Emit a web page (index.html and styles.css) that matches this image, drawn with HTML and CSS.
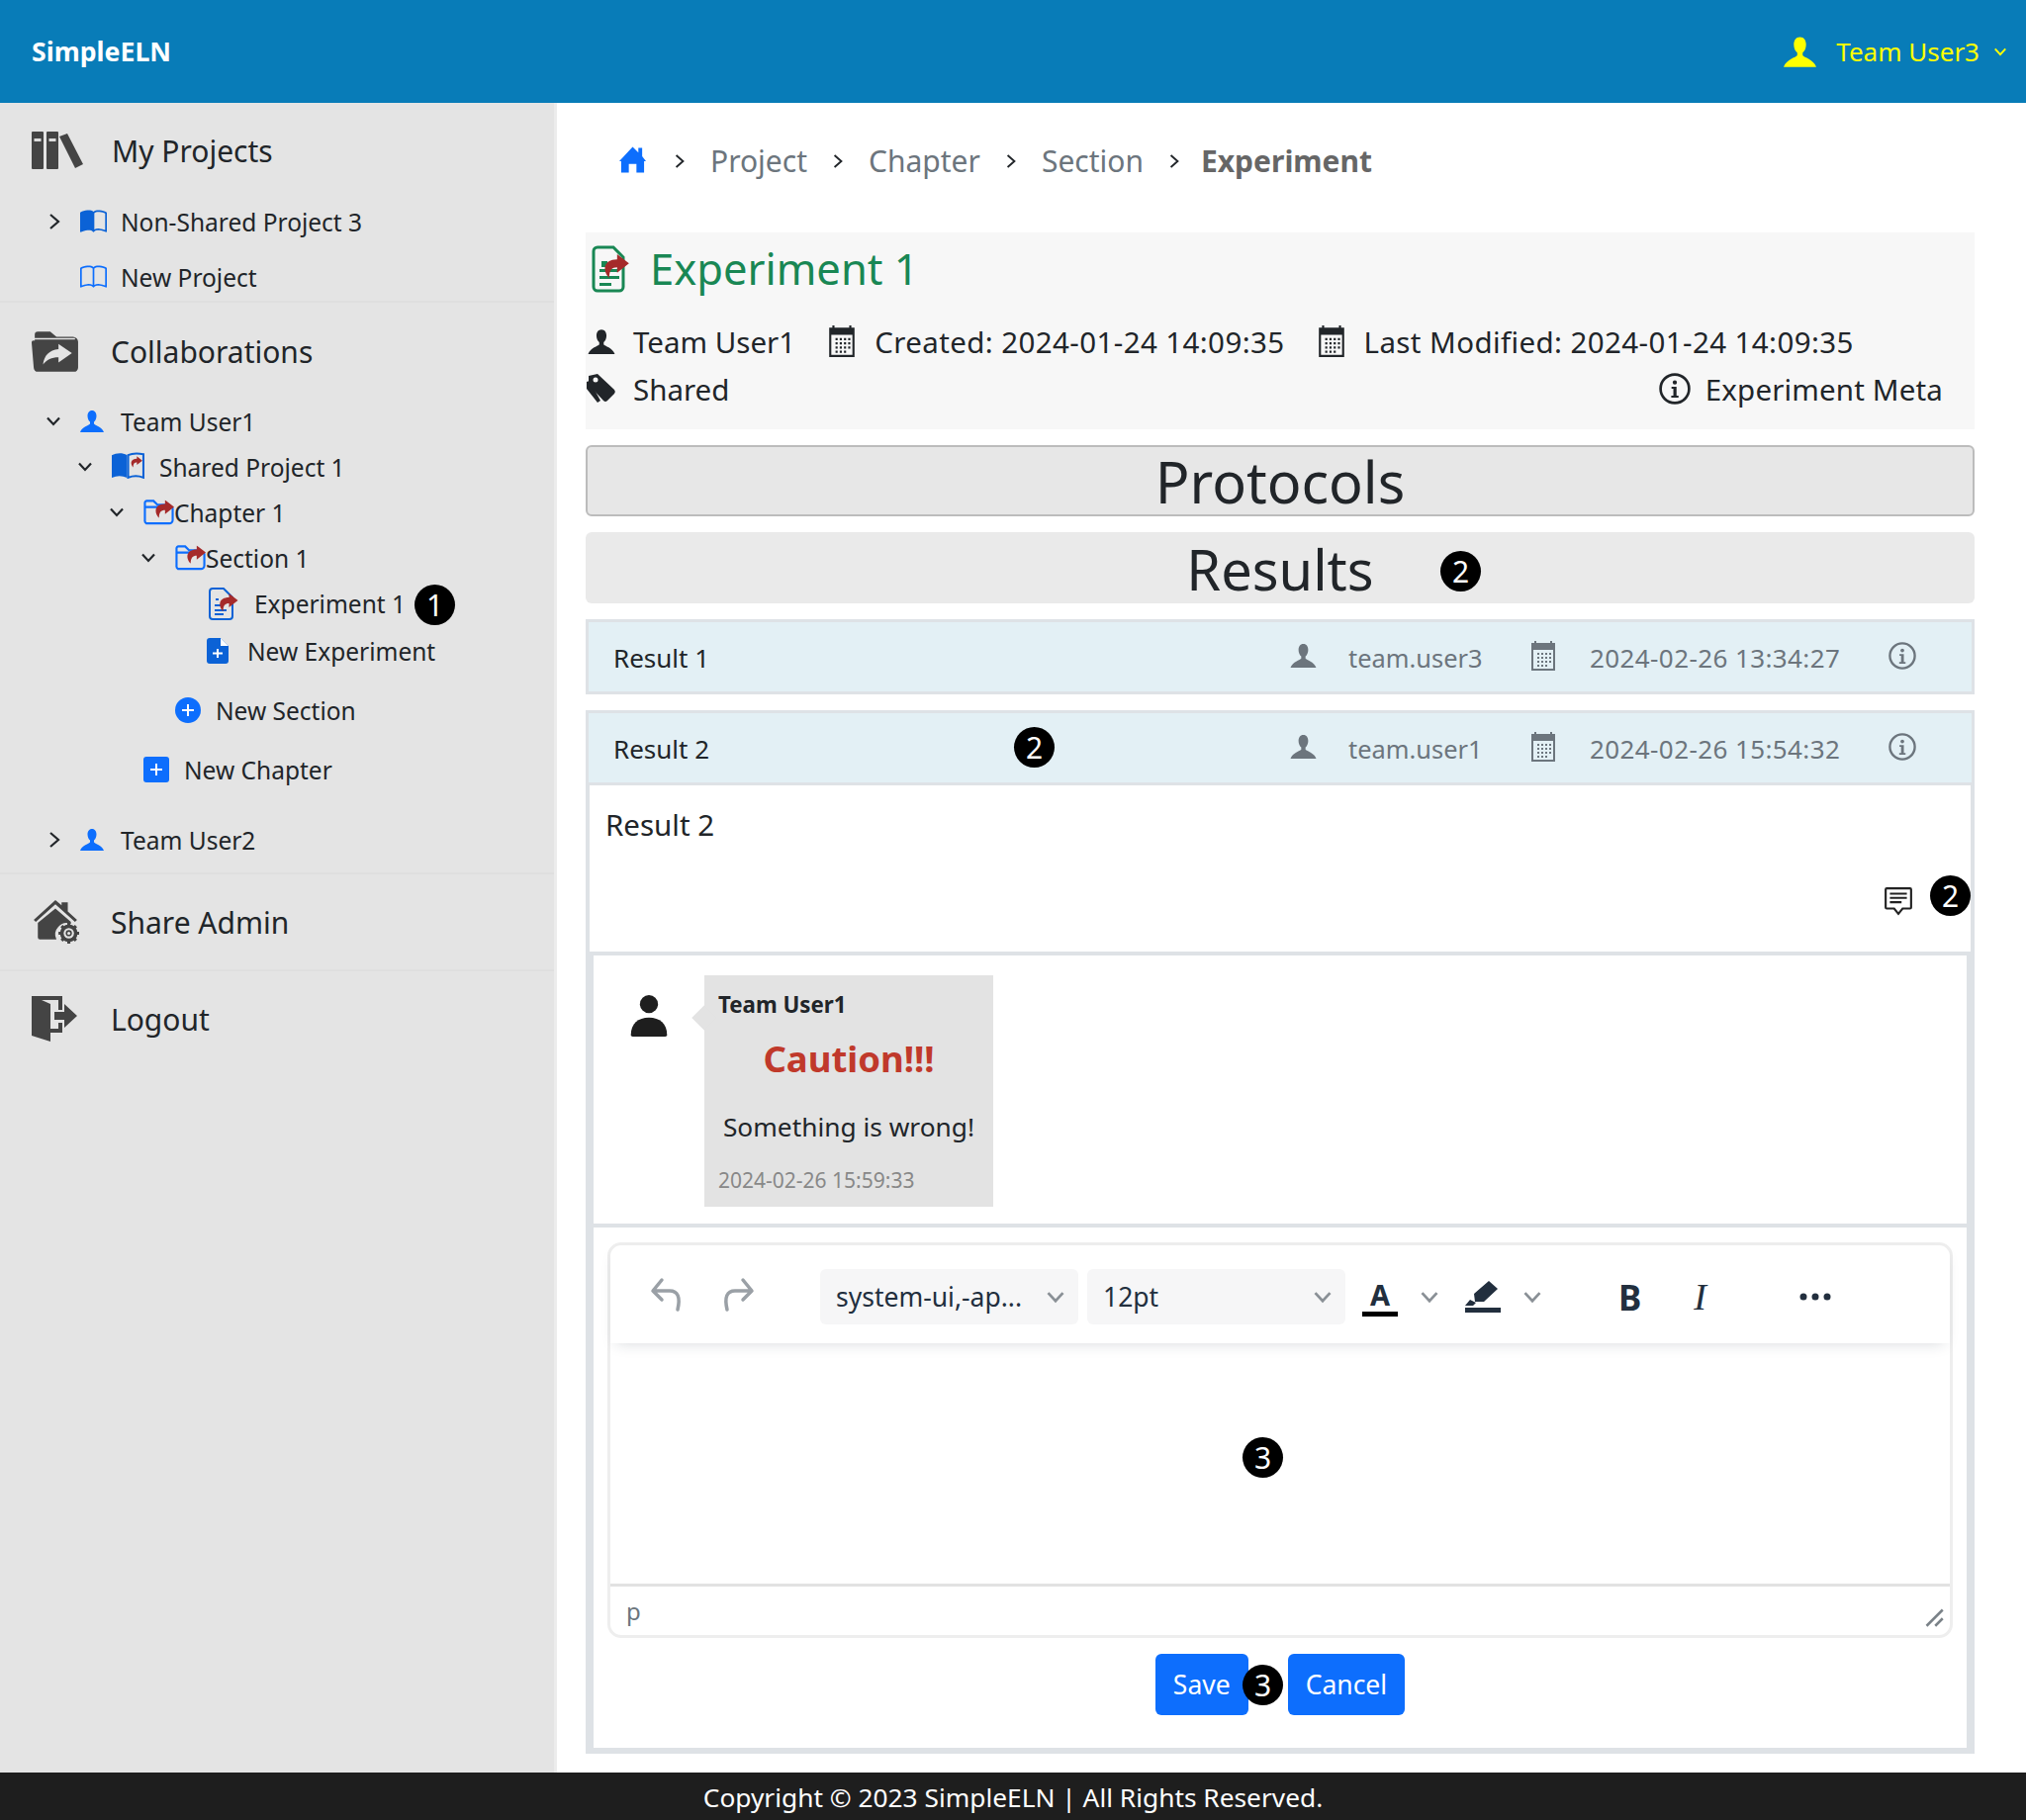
FILE: index.html
```html
<!DOCTYPE html>
<html lang="en">
<head>
    <meta charset="UTF-8">
    <meta name="viewport" content="width=device-width, initial-scale=1.0">
    <title>SimpleELN</title>
    <link rel="stylesheet" href="styles.css">
</head>
<body>
    <svg class="defs" width="0" height="0">
        <symbol id="person" viewBox="0 0 24 24"><path d="M12 1C9 1 7.500 3.500 7.500 6.500c0 2.500 1 5 2.500 6v2C9 16 2 17.500 0 23h24c-2-5.500-9-7-10-8.500v-2c1.500-1 2.500-3.500 2.500-6C16.500 3.500 15 1 12 1z"/></symbol>
        <symbol id="book" viewBox="0 0 16 16"><path d="M1 2.828c.885-.37 2.154-.769 3.388-.893 1.33-.134 2.458.063 3.112.752v9.746c-.935-.53-2.12-.603-3.213-.493-1.18.12-2.37.461-3.287.811V2.828zm7.500-.141c.654-.689 1.782-.886 3.112-.752 1.234.124 2.503.523 3.388.893v9.923c-.918-.35-2.107-.692-3.287-.81-1.094-.111-2.278-.039-3.213.492V2.687zM8 1.783C7.015.936 5.587.81 4.287.94c-1.514.153-3.042.672-3.994 1.105A.5.5 0 0 0 0 2.500v11a.5.5 0 0 0 .707.455c.882-.4 2.303-.881 3.680-1.020 1.409-.142 2.590.087 3.223.877a.5.5 0 0 0 .780 0c.633-.79 1.814-1.019 3.222-.877 1.378.139 2.800.620 3.681 1.020A.5.5 0 0 0 16 13.500v-11a.5.5 0 0 0-.293-.455c-.952-.433-2.480-.952-3.994-1.105C10.413.809 8.985.936 8 1.783z"/></symbol>
        <symbol id="bookhalf" viewBox="0 0 16 16"><path d="M8 1.783C7.015.936 5.587.81 4.287.94c-1.514.153-3.042.672-3.994 1.105A.5.5 0 0 0 0 2.500v11a.5.5 0 0 0 .707.455c.882-.4 2.303-.881 3.680-1.020 1.409-.142 2.590.087 3.223.877a.5.5 0 0 0 .780 0c.633-.79 1.814-1.019 3.222-.877 1.378.139 2.800.620 3.681 1.020A.5.5 0 0 0 16 13.500v-11a.5.5 0 0 0-.293-.455c-.952-.433-2.480-.952-3.994-1.105C10.413.809 8.985.936 8 1.783zm.5.904c.654-.689 1.782-.886 3.112-.752 1.234.124 2.503.523 3.388.893v9.923c-.918-.35-2.107-.692-3.287-.81-1.094-.111-2.278-.039-3.213.492V2.687z"/></symbol>
        <symbol id="calendar" viewBox="0 0 24 30"><path fill-rule="evenodd" d="M0 2h3V0h2v2h14V0h2v2h3v28H0zM2 9v19h20V9z"/><path d="M6 12h2v2H6zm4 0h2v2h-2zm4 0h2v2h-2zm4 0h2v2h-2zM6 16h2v2H6zm4 0h2v2h-2zm4 0h2v2h-2zm4 0h2v2h-2zM6 20h2v2H6zm4 0h2v2h-2zm4 0h2v2h-2zm4 0h2v2h-2zM6 24h2v2H6zm4 0h2v2h-2zm4 0h2v2h-2z"/></symbol>
        <symbol id="info" viewBox="0 0 24 24"><circle cx="12" cy="12" r="10.800" fill="none" stroke="currentColor" stroke-width="2"/><circle cx="12" cy="7.300" r="1.600"/><path d="M9.500 10.500h3.800v6.800h1.500v1.500H9.300v-1.500h1.600v-5.300H9.500z"/></symbol>
        <symbol id="share" viewBox="0 0 20 18"><path d="M11 0l9 7-9 7v-4C7 10 5 12 5 18 0 13 0 4 11 4z"/></symbol>
        <symbol id="chev-r" viewBox="0 0 14 18"><path d="M3 2l8 7-8 7" fill="none" stroke="currentColor" stroke-width="2.200"/></symbol>
        <symbol id="chev-d" viewBox="0 0 16 12"><path d="M2 2.500l6 6.500 6-6.500" fill="none" stroke="currentColor" stroke-width="2.200"/></symbol>
        <symbol id="folder" viewBox="0 0 32 26"><path d="M3 24.500h24a3.500 3.500 0 0 0 3.500-3.500V9.500a2 2 0 0 0-2-2H1.500V21A3.500 3.500 0 0 0 3 24.500zM1.500 7.500V3a2 2 0 0 1 2-2h7l4 4h10" fill="none" stroke="#0d6efd" stroke-width="2.200"/><use href="#share" x="11" y="0" width="21" height="19" fill="#a52a2a"/></symbol>
    </svg>

    <header class="topbar">
        <a class="brand">SimpleELN</a>
        <div class="usermenu">
            <svg class="usermenu-icon"><use href="#person"/></svg>
            <span>Team User3</span>
            <svg class="usermenu-caret"><use href="#chev-d"/></svg>
        </div>
    </header>

    <div class="layout">
        <aside class="sidebar">
            <section class="side-group group-projects">
                <div class="side-head">
                    <svg class="side-icon" viewBox="0 0 52 38">
                        <path fill="#444" d="M1 0h10a1 1 0 0 1 1 1v36a1 1 0 0 1-1 1H1a1 1 0 0 1-1-1V1a1 1 0 0 1 1-1zm15 0h10a1 1 0 0 1 1 1v36a1 1 0 0 1-1 1H16a1 1 0 0 1-1-1V1a1 1 0 0 1 1-1zM28 5l8-3 16 31-8 4z"/>
                        <path fill="#ddd" d="M2.500 7h7v3h-7zm15 0h7v3h-7z"/>
                    </svg>
                    <span>My Projects</span>
                </div>
                <ul class="tree">
                    <li class="tree-row"><span class="chev"><svg class="chev-r"><use href="#chev-r"/></svg></span><svg class="i-book dark"><use href="#bookhalf"/></svg><span>Non-Shared Project 3</span></li>
                    <li class="tree-row row-newproject"><span class="chev"></span><svg class="i-book"><use href="#book"/></svg><span>New Project</span></li>
                </ul>
            </section>

            <section class="side-group group-collab">
                <div class="side-head">
                    <svg class="side-icon" viewBox="0 0 46 40">
                        <path fill="#444" d="M3 10V4a3 3 0 0 1 3-3h12l6 5h16a5 5 0 0 1 5 5v25a4 4 0 0 1-4 4H6a4 4 0 0 1-4-4L0 12a2 2 0 0 1 3-2z"/>
                        <path fill="none" stroke="#e4e4e4" stroke-width="1.500" d="M2 8h40"/>
                        <path fill="#e4e4e4" d="M26 13l13 9-13 9v-5c-7 0-11 2-15 7 1-9 6-14 15-15z"/>
                    </svg>
                    <span>Collaborations</span>
                </div>
                <ul class="tree">
                    <li>
                        <div class="tree-row"><span class="chev"><svg class="chev-d"><use href="#chev-d"/></svg></span><svg class="i-person"><use href="#person"/></svg><span>Team User1</span></div>
                        <ul class="tree-sub">
                            <li>
                                <div class="tree-row"><span class="chev"><svg class="chev-d"><use href="#chev-d"/></svg></span>
                                    <svg class="i-sharedbook" viewBox="0 0 32 26"><path fill="#0b62d6" d="M0 3c4-2 10-3 15 0v22c-5-2-10-2-15 0z"/><path fill="none" stroke="#0b62d6" stroke-width="2" d="M16 3c4-2 9-2 15-1v23c-5-2-10-2-15 0z"/><use href="#share" x="18" y="3" width="12" height="13" fill="#a52a2a"/></svg>
                                    <span>Shared Project 1</span></div>
                                <ul class="tree-sub">
                                    <li>
                                        <div class="tree-row"><span class="chev"><svg class="chev-d"><use href="#chev-d"/></svg></span><svg class="i-folder"><use href="#folder"/></svg><span>Chapter 1</span></div>
                                        <ul class="tree-sub">
                                            <li>
                                                <div class="tree-row"><span class="chev"><svg class="chev-d"><use href="#chev-d"/></svg></span><svg class="i-folder"><use href="#folder"/></svg><span>Section 1</span></div>
                                                <ul class="tree-sub">
                                                    <li class="tree-row"><span class="chev"></span>
                                                        <svg class="i-exp" viewBox="0 0 30 33"><path fill="none" stroke="#0b62d6" stroke-width="2" d="M4 1h11l9 9v19a3 3 0 0 1-3 3H4a3 3 0 0 1-3-3V4a3 3 0 0 1 3-3z"/><path stroke="#0b62d6" stroke-width="2" d="M6 23h12M6 27h9M6 18h7M7 12h3"/><use href="#share" x="9" y="6" width="21" height="18" fill="#a52a2a"/></svg>
                                                        <span>Experiment 1</span>
                                                        <span class="badge badge-tree">1</span>
                                                    </li>
                                                    <li class="tree-row row-newexp"><span class="chev"></span>
                                                        <svg class="i-newexp" viewBox="0 0 22 26"><path fill="#0b62d6" d="M3 0h11l8 8v15a3 3 0 0 1-3 3H3a3 3 0 0 1-3-3V3a3 3 0 0 1 3-3z"/><path fill="#fff" d="M14 0v8h8zM10 11h2v3.500h4v2h-4V20h-2v-3.500H6v-2h4z"/></svg>
                                                        <span>New Experiment</span>
                                                    </li>
                                                </ul>
                                            </li>
                                            <li class="tree-row row-newsection"><span class="chev"></span>
                                                <svg class="i-plus" viewBox="0 0 26 26"><circle cx="13" cy="13" r="13" fill="#0d6efd"/><path fill="#fff" d="M12 7h2v5h5v2h-5v5h-2v-5H7v-2h5z"/></svg>
                                                <span>New Section</span>
                                            </li>
                                        </ul>
                                    </li>
                                    <li class="tree-row row-newchapter"><span class="chev"></span>
                                        <svg class="i-plus" viewBox="0 0 26 26"><rect width="26" height="26" rx="3" fill="#0d6efd"/><path fill="#fff" d="M12 7h2v5h5v2h-5v5h-2v-5H7v-2h5z"/></svg>
                                        <span>New Chapter</span>
                                    </li>
                                </ul>
                            </li>
                        </ul>
                    </li>
                    <li class="tree-row row-user2"><span class="chev"><svg class="chev-r"><use href="#chev-r"/></svg></span><svg class="i-person"><use href="#person"/></svg><span>Team User2</span></li>
                </ul>
            </section>

            <section class="side-group group-admin">
                <div class="side-head">
                    <svg class="side-icon" viewBox="0 0 46 42">
                        <path fill="#444" d="M23 0l6 5V2h6v9l9 8-2 2L23 4 4 21l-2-2z"/>
                        <path fill="#444" d="M23 8l15 13v2a11 11 0 0 0-14 15H8a2 2 0 0 1-2-2V22z"/>
                        <circle cx="36" cy="32" r="6.500" fill="none" stroke="#444" stroke-width="4"/>
                        <path stroke="#444" stroke-width="3" d="M36 22v20M26 32h20M29 25l14 14M43 25L29 39"/>
                        <circle cx="36" cy="32" r="5" fill="#e4e4e4"/>
                        <circle cx="36" cy="32" r="3" fill="#444"/><circle cx="36" cy="32" r="1.500" fill="#e4e4e4"/>
                    </svg>
                    <span>Share Admin</span>
                </div>
            </section>

            <section class="side-group group-logout">
                <div class="side-head">
                    <svg class="side-icon" viewBox="0 0 46 46">
                        <path fill="#444" d="M0 0h31v14h-4V4H10l9 4v25h8v-6h4v10H19v9L0 40z"/>
                        <path fill="#444" d="M23 16h10V8l13 12-13 12v-8H23z"/>
                    </svg>
                    <span>Logout</span>
                </div>
            </section>
        </aside>

        <main class="content">
            <nav class="crumbs">
                <svg class="crumb-home" viewBox="0 0 28 28"><path fill="#0d6efd" d="M14 1l6 6V2h4v9l4 5h-2v12h-8v-9h-8v9H2V16H0z"/></svg>
                <svg class="crumb-sep"><use href="#chev-r"/></svg>
                <span>Project</span>
                <svg class="crumb-sep"><use href="#chev-r"/></svg>
                <span>Chapter</span>
                <svg class="crumb-sep"><use href="#chev-r"/></svg>
                <span>Section</span>
                <svg class="crumb-sep"><use href="#chev-r"/></svg>
                <b>Experiment</b>
            </nav>

            <section class="exp-panel">
                <h1 class="exp-title">
                    <svg class="exp-title-icon" viewBox="0 0 38 48"><path fill="none" stroke="#198754" stroke-width="3" d="M6 2h16l10 10v30a4 4 0 0 1-4 4H6a4 4 0 0 1-4-4V6a4 4 0 0 1 4-4z"/><path fill="#198754" d="M8 24h18v3H8zm0 7h20v3H8zm0 7h12v3H8zm2-22h6v6h-6z"/><use href="#share" x="11" y="9" width="27" height="24" fill="#a52a2a"/></svg>
                    Experiment 1
                </h1>
                <div class="exp-meta">
                    <span class="meta-item item-owner"><svg class="meta-person"><use href="#person"/></svg>Team User1</span>
                    <span class="meta-item item-created"><svg class="meta-cal"><use href="#calendar"/></svg>Created: 2024-01-24 14:09:35</span>
                    <span class="meta-item item-modified"><svg class="meta-cal"><use href="#calendar"/></svg>Last Modified: 2024-01-24 14:09:35</span>
                </div>
                <div class="exp-meta exp-meta-second">
                    <span class="meta-item item-owner"><svg class="meta-tag" viewBox="0 0 32 30"><path d="M1 8l3-1 11 20-3 2-11-14z" /><path d="M3 2l9-2 17 16a3 3 0 0 1 0 4l-7 7a3 3 0 0 1-4 0L3 11z"/><circle cx="10" cy="6" r="2.500" fill="#f7f7f7"/></svg>Shared</span>
                    <span class="meta-item item-info"><svg class="meta-info"><use href="#info"/></svg>Experiment Meta</span>
                </div>
            </section>

            <div class="block-title block-protocols">Protocols</div>
            <div class="block-title block-results">Results<span class="badge badge-results">2</span></div>

            <div class="result-head result-closed">
                <span class="result-name">Result 1</span>
                <svg class="r-person"><use href="#person"/></svg><span class="r-by">team.user3</span>
                <svg class="r-cal"><use href="#calendar"/></svg><span class="r-when">2024-02-26 13:34:27</span>
                <svg class="r-info"><use href="#info"/></svg>
            </div>

            <div class="result-card">
                <div class="result-head">
                    <span class="result-name">Result 2</span>
                    <span class="badge badge-head">2</span>
                    <svg class="r-person"><use href="#person"/></svg><span class="r-by">team.user1</span>
                    <svg class="r-cal"><use href="#calendar"/></svg><span class="r-when">2024-02-26 15:54:32</span>
                    <svg class="r-info"><use href="#info"/></svg>
                </div>
                <div class="result-body">
                    <p>Result 2</p>
                    <svg class="comment-icon" viewBox="0 0 28 28"><path fill="none" stroke="#222" stroke-width="2" d="M3 2h22a1 1 0 0 1 1 1v17a1 1 0 0 1-1 1h-7l-4 5-4-5H3a1 1 0 0 1-1-1V3a1 1 0 0 1 1-1z"/><path stroke="#222" stroke-width="2" d="M6 7h16M6 11h16M6 15h11"/></svg>
                    <span class="badge badge-comment">2</span>
                </div>
                <div class="comments-wrap">
                    <div class="comment-list">
                        <svg class="comment-avatar" viewBox="0 0 40 46"><circle cx="20" cy="10" r="10"/><path d="M0 44c0-12 8-19 20-19s20 7 20 19a2 2 0 0 1-2 2H2a2 2 0 0 1-2-2z"/></svg>
                        <div class="bubble">
                            <div class="bubble-user">Team User1</div>
                            <div class="bubble-alert">Caution!!!</div>
                            <div class="bubble-text">Something is wrong!</div>
                            <div class="bubble-time">2024-02-26 15:59:33</div>
                        </div>
                    </div>
                    <div class="reply">
                        <div class="editor">
                            <div class="editor-bar">
                                <svg class="tool-undo" viewBox="0 0 34 36"><path fill="none" stroke="#9aa0a6" stroke-width="3.500" stroke-linecap="round" stroke-linejoin="round" d="M12 3L3 14l9 9M4 14h16c8 0 11 6 8 19"/></svg>
                                <svg class="tool-redo" viewBox="0 0 34 36"><path fill="none" stroke="#9aa0a6" stroke-width="3.500" stroke-linecap="round" stroke-linejoin="round" d="M22 3l9 11-9 9M30 14H14C6 14 3 20 6 33"/></svg>
                                <div class="tool-select select-font"><span>system-ui,-ap...</span><svg><use href="#chev-d"/></svg></div>
                                <div class="tool-select select-size"><span>12pt</span><svg><use href="#chev-d"/></svg></div>
                                <span class="tool-color tool-a">A</span>
                                <svg class="tool-caret caret-a"><use href="#chev-d"/></svg>
                                <svg class="tool-color tool-mark" viewBox="0 0 36 32"><path fill="#222f3e" d="M24 0l9 8-14 13H10l-1-8zM5 19l6 3-3 3H0z"/><path d="M0 27h36v5H0z"/></svg>
                                <svg class="tool-caret caret-mark"><use href="#chev-d"/></svg>
                                <b class="tool-b">B</b>
                                <i class="tool-i">I</i>
                                <svg class="tool-more" viewBox="0 0 32 8"><circle cx="4" cy="4" r="3.500"/><circle cx="16" cy="4" r="3.500"/><circle cx="28" cy="4" r="3.500"/></svg>
                            </div>
                            <div class="editor-body"><span class="badge badge-editor">3</span></div>
                            <div class="editor-status">
                                <span>p</span>
                                <svg class="resize" viewBox="0 0 16 16"><path stroke="#7a8288" stroke-width="2" d="M2 15L15 2M9 15l6-6"/></svg>
                            </div>
                        </div>
                        <div class="reply-actions">
                            <button class="btn">Save</button>
                            <span class="badge badge-save">3</span>
                            <button class="btn">Cancel</button>
                        </div>
                    </div>
                </div>
            </div>
        </main>
    </div>

    <footer class="footer">Copyright © 2023 SimpleELN | All Rights Reserved.</footer>
</body>
</html>
```

FILE: styles.css
```css
* {
    box-sizing: border-box;
}

.defs {
    position: absolute;
}

svg {
    fill: currentColor;
    flex-shrink: 0;
}

body {
    margin: 0;
    height: 1840px;
    display: flex;
    flex-direction: column;
    font-family: "Noto Sans", sans-serif;
    font-size: 24.5px;
    color: #212529;
    background: #fff;
    overflow: hidden;
}

/* top bar */
.topbar {
    height: 104px;
    flex-shrink: 0;
    display: flex;
    align-items: center;
    justify-content: space-between;
    padding: 0 19px 0 32px;
    background: #087cb8;
}

.brand {
    color: #fff;
    font-weight: 700;
    font-size: 26.7px;
    margin-top: -2px;
}

.usermenu {
    display: flex;
    align-items: center;
    color: #ffff00;
    font-size: 26px;
}

.usermenu-icon {
    width: 37px;
    height: 33px;
    margin-right: 18px;
}

.usermenu-caret {
    width: 14px;
    height: 11px;
    margin-left: 14px;
}

.layout {
    flex: 1;
    display: flex;
    min-height: 0;
}

/* sidebar */
.sidebar {
    width: 563px;
    flex-shrink: 0;
    background: #e4e4e4;
    border-right: 3px solid #ececec;
}

.side-group {
    border-bottom: 2px solid #dfdfdf;
}

.side-group:last-child {
    border-bottom: 0;
}

.group-projects {
    height: 202px;
}

.group-collab {
    height: 578px;
}

.group-admin {
    height: 98px;
}

.side-head {
    height: 96px;
    display: flex;
    align-items: center;
    padding-left: 32px;
    font-size: 30px;
}

.side-icon {
    width: 52px;
    height: 44px;
    margin-right: 29px;
    fill: #444;
}

.group-collab .side-icon,
.group-admin .side-icon {
    width: 48px;
    margin-right: 32px;
}

.group-logout .side-icon {
    width: 46px;
    height: 46px;
    margin-right: 34px;
}

.tree,
.tree-sub {
    list-style: none;
    margin: 0;
    padding: 0;
}

.tree {
    padding-left: 36px;
}

.tree-sub {
    padding-left: 32px;
}

.tree-row {
    height: 46px;
    padding-bottom: 2px;
    display: flex;
    align-items: center;
    position: relative;
}

.chev {
    width: 45px;
    flex-shrink: 0;
    padding-left: 10px;
    display: flex;
    align-items: center;
    color: #212529;
}

.chev-r {
    width: 14px;
    height: 18px;
    margin-left: 2px;
}

.chev-d {
    width: 16px;
    height: 12px;
}

.group-projects .tree-row {
    height: 50px;
}

.group-projects .tree-row:first-child {
    margin-bottom: 6px;
}

.group-collab .side-head {
    height: 98px;
}

.i-book {
    width: 27px;
    height: 27px;
    margin-right: 14px;
    color: #0d6efd;
}

.i-book.dark {
    color: #0b62d6;
}

.i-person {
    width: 24px;
    height: 24px;
    margin-right: 17px;
    color: #0d6efd;
}

.i-sharedbook {
    width: 33px;
    height: 27px;
    margin: -3px 15px 0 0;
}

.i-folder {
    width: 31px;
    height: 26px;
}

.i-exp {
    width: 30px;
    height: 33px;
    margin: 0 16px 0 2px;
}

.i-newexp {
    width: 22px;
    height: 26px;
    margin-right: 19px;
}

.i-plus {
    width: 26px;
    height: 26px;
    margin-right: 15px;
}

.row-newexp {
    height: 50px;
}

.row-newsection {
    margin-top: 12px;
}

.row-newchapter {
    margin-top: 14px;
}

.row-user2 {
    margin-top: 25px;
}

/* annotation badges */
.badge {
    position: absolute;
    width: 41px;
    height: 41px;
    border-radius: 50%;
    background: #000;
    color: #fff;
    font-size: 30px;
    line-height: 41px;
    text-align: center;
}

.badge-tree {
    left: 255px;
    top: 3px;
}

.badge-results {
    left: 864px;
    top: 19px;
}

.badge-head {
    left: 430px;
    top: 14px;
}

.badge-comment {
    right: 0;
    top: 91px;
}

.badge-editor {
    left: 639px;
    top: 95px;
}

.badge-save {
    left: 642px;
    top: 11px;
}

/* main column */
.content {
    flex: 1;
    min-width: 0;
    padding: 0 52px 0 29px;
}

.crumbs {
    height: 131px;
    padding: 34px 0 0 34px;
    display: flex;
    align-items: flex-start;
    gap: 25px;
    font-size: 30px;
    line-height: 50px;
    color: #6c757d;
}

.crumbs b {
    color: #666;
    margin-left: -4px;
}

.crumb-home {
    width: 27px;
    height: 28px;
    margin: 9px 3px 0 0;
}

.crumb-sep {
    width: 12px;
    height: 18px;
    margin-top: 16px;
    color: #212529;
}

.exp-panel {
    height: 199px;
    background: #f7f7f7;
    padding: 0 32px 0 2px;
}

.exp-title {
    height: 72px;
    margin: 0 0 15px;
    display: flex;
    align-items: center;
    font-size: 43.5px;
    font-weight: 400;
    color: #198754;
}

.exp-title-icon {
    width: 38px;
    height: 48px;
    margin: 2px 21px 0 4px;
}

.exp-meta {
    height: 48px;
    display: flex;
    align-items: center;
    font-size: 29.5px;
    padding-bottom: 2px;
}

.exp-meta-second {
    justify-content: space-between;
}

.meta-item {
    display: flex;
    align-items: center;
}

.item-created {
    margin-left: 32px;
}

.item-created,
.item-modified {
    letter-spacing: 0.4px;
}

.item-modified {
    margin-left: 32px;
}

.item-info {
    letter-spacing: 0.15px;
}

.meta-person {
    width: 28px;
    height: 27px;
    margin-right: 18px;
}

.meta-cal {
    width: 30px;
    height: 32px;
    margin-right: 18px;
}

.meta-tag {
    width: 32px;
    height: 30px;
    margin: 0 16px 0 -2px;
}

.meta-info {
    width: 32px;
    height: 32px;
    margin-right: 15px;
}

.block-title {
    position: relative;
    height: 72px;
    margin-top: 16px;
    border-radius: 6px;
    font-size: 57.5px;
    line-height: 74px;
    text-align: center;
}

.block-protocols {
    background: #e7e7e7;
    border: 2px solid #bcbcbc;
    line-height: 70px;
}

.block-results {
    background: #eaeaea;
    font-size: 56px;
}

.result-head {
    position: relative;
    height: 76px;
    display: flex;
    align-items: center;
    background: #e3f0f5;
    color: #6c757d;
    padding-left: 25px;
    font-size: 26px;
}

.result-closed {
    margin-top: 16px;
    border: 3px solid #dee2e6;
    padding-top: 2px;
}

.result-name {
    flex: 1;
    color: #212529;
}

.r-person {
    width: 27px;
    height: 26px;
    margin: -4px 32px 0 0;
}

.r-by {
    width: 184px;
    font-size: 25.4px;
}

.r-cal {
    width: 26px;
    height: 30px;
    margin: -4px 34px 0 0;
}

.r-when {
    width: 302px;
    letter-spacing: 0.4px;
}

.r-info {
    width: 28px;
    height: 28px;
    margin: -4px 56px 0 0;
}

.result-card {
    margin-top: 16px;
    border: 4px solid #dee2e6;
    border-bottom-width: 3px;
}

.result-card .result-head {
    margin: -4px -4px 0;
    border: 3px solid #dee2e6;
    padding-top: 2px;
}

.result-body {
    position: relative;
    height: 168px;
    font-size: 29.5px;
}

.result-body p {
    margin: 0;
    padding: 19px 0 0 16px;
}

.comment-icon {
    position: absolute;
    right: 58px;
    top: 102px;
    width: 30px;
    height: 30px;
}

.comments-wrap {
    border: 4px solid #dee2e6;
    border-bottom-width: 3px;
}

.comment-list {
    height: 275px;
    display: flex;
    align-items: flex-start;
    padding: 20px 0 0 36px;
    border-bottom: 4px solid #dee2e6;
}

.comment-avatar {
    width: 40px;
    height: 42px;
    margin: 20px 36px 0 0;
    fill: #1e1e1e;
}

.bubble {
    position: relative;
    width: 292px;
    height: 234px;
    background: #e3e3e3;
    padding: 0 14px;
}

.bubble::before {
    content: "";
    position: absolute;
    left: -9px;
    top: 34px;
    width: 18px;
    height: 18px;
    background: #e3e3e3;
    transform: rotate(45deg);
}

.bubble-user {
    position: relative;
    font-size: 22.3px;
    font-weight: 700;
    line-height: 30px;
    padding-top: 15px;
    height: 45px;
}

.bubble-alert {
    font-size: 36.5px;
    font-weight: 700;
    color: #c0392b;
    text-align: center;
    line-height: 46px;
    margin-top: 16px;
}

.bubble-text {
    font-size: 26.3px;
    line-height: 34px;
    margin: 29px -10px 0 -10px;
    text-align: center;
    white-space: nowrap;
}

.bubble-time {
    font-size: 21px;
    color: #888;
    line-height: 28px;
    margin-top: 23px;
}

.reply {
    padding: 15px 14px 0;
    height: 526px;
}

.editor {
    height: 400px;
    display: flex;
    flex-direction: column;
    border: 3px solid #eeeeee;
    border-radius: 14px;
}

.editor-bar {
    position: relative;
    height: 99px;
    flex-shrink: 0;
    display: flex;
    align-items: center;
    padding: 5px 0 0 40px;
    box-shadow: 0 6px 14px -6px rgba(34, 47, 62, 0.18);
    color: #222f3e;
}

.editor-bar > * {
    flex-shrink: 0;
}

.tool-undo,
.tool-redo {
    width: 34px;
    height: 36px;
    margin-bottom: 4px;
}

.tool-redo {
    margin: 0 66px 4px 38px;
}

.tool-select {
    width: 261px;
    height: 56px;
    margin-right: 9px;
    padding: 0 13px 0 16px;
    background: #f6f6f7;
    border-radius: 6px;
    display: flex;
    align-items: center;
    justify-content: space-between;
    font-size: 26.5px;
}

.tool-select svg {
    width: 20px;
    height: 15px;
    color: #8a9096;
}

.tool-a {
    width: 36px;
    margin-left: 8px;
    font-size: 29px;
    font-weight: 700;
    line-height: 34px;
    text-align: center;
    border-bottom: 5px solid #000;
}

.tool-mark {
    width: 36px;
    height: 32px;
    margin-left: 26px;
}

.tool-caret {
    width: 20px;
    height: 15px;
    color: #8a9096;
}

.caret-a {
    margin-left: 22px;
}

.caret-mark {
    margin-left: 22px;
}

.tool-b {
    margin-left: 77px;
    font-size: 35px;
}

.tool-i {
    margin-left: 53px;
    font-family: "Liberation Serif", serif;
    font-size: 38px;
}

.tool-more {
    width: 32px;
    height: 8px;
    margin-left: 94px;
}

.editor-body {
    position: relative;
    flex: 1;
    border-bottom: 3px solid #e2e2e2;
}

.editor-status {
    position: relative;
    height: 49px;
    flex-shrink: 0;
    padding: 0 0 0 16px;
    display: flex;
    align-items: center;
    justify-content: space-between;
    font-size: 24px;
    color: #6c757d;
}

.resize {
    width: 20px;
    height: 20px;
    margin: 12px 6px 0 0;
}

.reply-actions {
    position: relative;
    margin-top: 16px;
    display: flex;
    justify-content: center;
    gap: 40px;
}

.btn {
    height: 62px;
    padding: 0 18px;
    border: 0;
    border-radius: 6px;
    background: #0d6efd;
    color: #fff;
    font-family: inherit;
    font-size: 26.5px;
}

.footer {
    height: 48px;
    flex-shrink: 0;
    background: #1e1e1e;
    color: #fff;
    text-align: center;
    font-size: 26.3px;
    line-height: 50px;
}
```
